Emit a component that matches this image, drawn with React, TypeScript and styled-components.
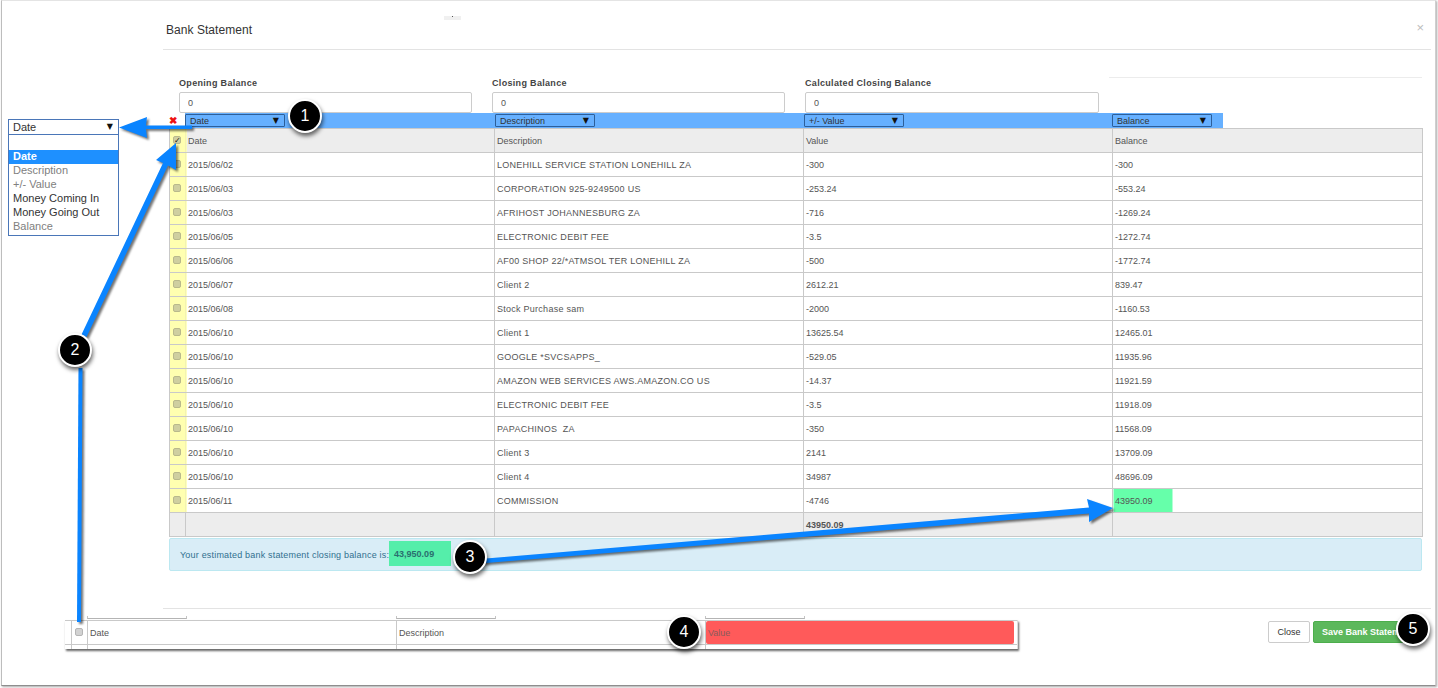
import React from "react";
import styled, { createGlobalStyle } from "styled-components";

const Global = createGlobalStyle`
  html, body { margin: 0; padding: 0; background: #fff; width: 1438px; height: 688px; overflow: hidden; }
  body { font-family: "Liberation Sans", Arial, sans-serif; color: #555; }
  * { box-sizing: border-box; }
`;

const Page = styled.div`
  position: relative;
  width: 1438px;
  height: 688px;
  overflow: hidden;
  background: #fff;
`;
const Frame = styled.div`
  margin-left: 1px;
  width: 1435px;
  height: 686px;
  background: #fff;
  border-top: 1px solid #e4e4e4;
  border-left: 1px solid #bdbdbd;
  border-right: 1px solid #cfcfcf;
  border-bottom: 1px solid #8e8e8e;
  box-shadow: 1px 1px 2px rgba(0, 0, 0, 0.35);
  padding-left: 161px;
  padding-right: 4px;
  display: flex;
  flex-direction: column;
`;
const Header = styled.header`
  position: relative;
  height: 49px;
  flex: none;
  border-bottom: 1px solid #e3e3e3;
  padding: 21px 0 0 3px;
  width: 1268px;
`;
const Title = styled.h4`
  margin: 0;
  font-weight: 400;
  font-size: 12px;
  line-height: 16px;
  letter-spacing: 0.05px;
  color: #333;
`;
const Grip = styled.span`
  position: absolute;
  left: 281px;
  top: 15px;
  width: 17px;
  height: 4px;
  background: #f0f0f0;
  &::after {
    content: "";
    position: absolute;
    left: 8px;
    top: 0;
    width: 1px;
    height: 1px;
    background: #555;
  }
`;
const CloseX = styled.span`
  position: absolute;
  right: 7px;
  top: 20px;
  font-size: 13px;
  line-height: 14px;
  color: #bdbdbd;
`;
const Body = styled.main`
  flex: none;
  height: 558px;
  padding: 27px 8px 0 6px;
`;
const FormRow = styled.div`
  display: grid;
  grid-template-columns: 313px 313px 304px 313px;
  padding-left: 10px;
  height: 36px;
`;
const Field = styled.div`
  display: flex;
  flex-direction: column;
  padding-top: 1px;
  &:nth-child(3) input { width: 294px; }
`;
const Rule = styled.div`
  border-top: 1px solid #ececec;
  height: 1px;
`;
const Label = styled.label`
  font-size: 9px;
  font-weight: 700;
  line-height: 10px;
  letter-spacing: 0.32px;
  color: #444;
  margin-bottom: 4px;
`;
const TextField = styled.input`
  width: 293px;
  height: 21px;
  padding: 0 8px;
  font: 9px "Liberation Sans", sans-serif;
  color: #555;
  background: #fff;
  border: 1px solid #ccc;
  border-radius: 2px;
  outline: none;
`;
const SelectRow = styled.div`
  display: flex;
  height: 15px;
`;
const Cross = styled.span`
  width: 16px;
  flex: none;
  padding-right: 8px;
  text-align: center;
  font-size: 10px;
  line-height: 15px;
  font-weight: 700;
  color: #ee1111;
`;
const Bar = styled.div`
  width: 1038px;
  display: grid;
  grid-template-columns: 310px 309px 308px 111px;
  background: #66b0ff;
  padding-top: 1px;
`;
const MiniSelect = styled.div`
  width: 100px;
  height: 13px;
  display: flex;
  align-items: center;
  justify-content: space-between;
  padding: 0 5px 0 4px;
  border: 1px solid #2d5f9a;
  border-radius: 1px;
  font-size: 9px;
  color: #333;
`;
const Arrow = styled.span`
  font-family: "DejaVu Sans", sans-serif;
  font-size: 8px;
  line-height: 1;
  color: #111;
`;
const Table = styled.table`
  width: 1253px;
  table-layout: fixed;
  border-collapse: collapse;
  font-size: 9px;
  color: #555;
`;
const Tr = styled.tr<{ $shade?: boolean }>`
  height: 24px;
  background: ${(p) => (p.$shade ? "#ededed" : "#fff")};
`;
const Td = styled.td<{ $strong?: boolean; $match?: boolean; $wide?: boolean }>`
  position: relative;
  height: 24px;
  padding: 0 0 0 2px;
  border: 1px solid #c9c9c9;
  vertical-align: middle;
  white-space: pre;
  letter-spacing: ${(p) => (p.$wide ? "0.26px" : "0")};
  font-weight: ${(p) => (p.$strong ? 700 : 400)};
  background: ${(p) =>
    p.$match ? "linear-gradient(to right, #66ffaa 59px, transparent 59px)" : "transparent"};
`;
const CheckTd = styled(Td)<{ $plain?: boolean }>`
  padding: 0;
  background: ${(p) => (p.$plain ? "transparent" : "#ffffb0")};
  &::after {
    content: "";
    display: ${(p) => (p.$plain ? "none" : "block")};
    position: absolute;
    left: 100%;
    top: 0;
    width: 2px;
    height: 100%;
    background: rgba(255, 255, 170, 0.75);
  }
`;
const Check = styled.span<{ $grey?: boolean }>`
  display: block;
  position: relative;
  width: 8px;
  height: 8px;
  margin: -2px 0 0 3px;
  border-radius: 2px;
  border: 1px solid ${(p) => (p.$grey ? "#b5b5b5" : "#b9b98c")};
  background: ${(p) => (p.$grey ? "#d2d2d2" : "#cfcfa0")};
  color: #111;
  font: 700 8px/7px "DejaVu Sans", sans-serif;
`;
const SnipCheck = styled(Check)`
  margin: 0 0 0 1px;
`;
const Alert = styled.div`
  height: 33px;
  width: 1253px;
  margin-top: 1px;
  display: flex;
  align-items: center;
  padding-left: 10px;
  background: #d9edf7;
  border: 1px solid #bce8f1;
  border-radius: 2px;
  font-size: 9px;
  letter-spacing: 0.19px;
  color: #31708f;
`;
const Estimate = styled.b`
  display: flex;
  align-items: center;
  width: 62px;
  height: 25px;
  margin: -2px 0 0 0;
  padding-left: 5px;
  background: #55eeaa;
  letter-spacing: 0;
  color: #2a6f6f;
`;
const Footer = styled.footer`
  width: 1268px;
  flex: 1;
  border-top: 1px solid #e3e3e3;
  display: flex;
  justify-content: flex-end;
  gap: 3px;
  padding: 12px 8px 0 0;
  align-items: flex-start;
`;
const Btn = styled.button<{ $primary?: boolean }>`
  height: 22px;
  width: ${(p) => (p.$primary ? "110px" : "42px")};
  padding: 0 0 0 ${(p) => (p.$primary ? "8px" : "0")};
  text-align: ${(p) => (p.$primary ? "left" : "center")};
  border-radius: 2px;
  font: ${(p) => (p.$primary ? 700 : 400)} 9px "Liberation Sans", sans-serif;
  color: ${(p) => (p.$primary ? "#fff" : "#333")};
  background: ${(p) => (p.$primary ? "#5cb85c" : "#fff")};
  border: 1px solid ${(p) => (p.$primary ? "#4cae4c" : "#ccc")};
`;

const DropBox = styled.div`
  position: absolute;
  left: 8px;
  top: 119px;
  width: 111px;
  font-size: 11px;
  color: #333;
  background: #fff;
`;
const DropHead = styled.div`
  height: 16px;
  display: flex;
  align-items: center;
  justify-content: space-between;
  padding: 0 5px 0 4px;
  border: 1px solid #4a76b8;
`;
const DropList = styled.ul`
  list-style: none;
  margin: 0;
  padding: 15px 0 1px;
  border: 1px solid #4a76b8;
  border-top: none;
`;
const DropItem = styled.li<{ $active?: boolean; $dim?: boolean }>`
  height: 14px;
  line-height: 13px;
  padding-left: 4px;
  font-weight: ${(p) => (p.$active ? 700 : 400)};
  background: ${(p) => (p.$active ? "#1e90ff" : "transparent")};
  color: ${(p) => (p.$active ? "#fff" : p.$dim ? "#808080" : "#333")};
`;

const Snippet = styled.div`
  position: absolute;
  left: 65px;
  top: 620px;
  width: 953px;
  height: 29px;
  background: #fff;
  border-right: 1px solid #ddd;
  box-shadow: 1px 2px 2px rgba(0, 0, 0, 0.6);
  font-size: 9px;
  color: #555;
`;
const SnipRow = styled.div`
  display: grid;
  grid-template-columns: 6px 16px 309px 309px 309px;
  height: 29px;
  border-top: 1px solid #c9c9c9;
  background: linear-gradient(to bottom, transparent 23px, #c9c9c9 23px, #c9c9c9 24px, transparent 24px);
`;
const SnipCell = styled.div<{ $bad?: boolean }>`
  height: 28px;
  border-left: 1px solid #c9c9c9;
  padding: 7px 0 0 2px;
  line-height: 10px;
  position: relative;
  &:first-child { border-left: none; }
  ${(p) =>
    p.$bad
      ? `&::before { content: ""; position: absolute; left: 0; top: 0; width: 100%; height: 23px; background: #ff5a5a; border-radius: 2px; }
         & > span { position: relative; color: #8a5a5a; }`
      : ""}
`;
const Tick = styled.i<{ $x: number; $w: number }>`
  position: absolute;
  top: -4px;
  left: ${(p) => p.$x}px;
  width: ${(p) => p.$w}px;
  height: 3px;
  border-left: 1px solid #c4c4c4;
  border-right: 1px solid #c4c4c4;
  border-bottom: 1px solid #b4b4b4;
  background: #fff;
  z-index: 1;
`;

const Marks = styled.svg`
  position: absolute;
  left: 0;
  top: 0;
  width: 1438px;
  height: 688px;
  pointer-events: none;
  filter: drop-shadow(2px 2px 1.2px rgba(0, 0, 0, 0.55));
`;
const Bubble = styled.div<{ $x: number; $y: number; $r: number }>`
  position: absolute;
  left: ${(p) => p.$x - p.$r}px;
  top: ${(p) => p.$y - p.$r}px;
  width: ${(p) => p.$r * 2}px;
  height: ${(p) => p.$r * 2}px;
  border-radius: 50%;
  background: #000;
  border: 2px solid #fff;
  box-shadow: 1px 3px 4px rgba(0, 0, 0, 0.6);
  display: flex;
  align-items: center;
  justify-content: center;
  color: #fff;
  font-size: 16px;
  line-height: 1;
`;

type Row = [string, string, string, string];
const rows: Row[] = [
  ["2015/06/02", "LONEHILL SERVICE STATION LONEHILL ZA", "-300", "-300"],
  ["2015/06/03", "CORPORATION 925-9249500 US", "-253.24", "-553.24"],
  ["2015/06/03", "AFRIHOST JOHANNESBURG ZA", "-716", "-1269.24"],
  ["2015/06/05", "ELECTRONIC DEBIT FEE", "-3.5", "-1272.74"],
  ["2015/06/06", "AF00 SHOP 22/*ATMSOL TER LONEHILL ZA", "-500", "-1772.74"],
  ["2015/06/07", "Client 2", "2612.21", "839.47"],
  ["2015/06/08", "Stock Purchase sam", "-2000", "-1160.53"],
  ["2015/06/10", "Client 1", "13625.54", "12465.01"],
  ["2015/06/10", "GOOGLE *SVCSAPPS_", "-529.05", "11935.96"],
  ["2015/06/10", "AMAZON WEB SERVICES AWS.AMAZON.CO US", "-14.37", "11921.59"],
  ["2015/06/10", "ELECTRONIC DEBIT FEE", "-3.5", "11918.09"],
  ["2015/06/10", "PAPACHINOS  ZA", "-350", "11568.09"],
  ["2015/06/10", "Client 3", "2141", "13709.09"],
  ["2015/06/10", "Client 4", "34987", "48696.09"],
  ["2015/06/11", "COMMISSION", "-4746", "43950.09"],
];
const selects = ["Date", "Description", "+/- Value", "Balance"];
const columns = [16, 309, 309, 309, 310];
const options: { label: string; active?: boolean; dim?: boolean }[] = [
  { label: "Date", active: true },
  { label: "Description", dim: true },
  { label: "+/- Value", dim: true },
  { label: "Money Coming In" },
  { label: "Money Going Out" },
  { label: "Balance", dim: true },
];
const bubbles = [
  { n: 1, x: 305, y: 116, r: 17 },
  { n: 2, x: 75, y: 350, r: 17 },
  { n: 3, x: 470, y: 557, r: 17 },
  { n: 4, x: 684, y: 632, r: 17 },
  { n: 5, x: 1413, y: 629, r: 17 },
];

export default function App() {
  return (
    <Page>
      <Global />
      <Frame>
        <Header>
          <Title>Bank Statement</Title>
          <Grip />
          <CloseX>×</CloseX>
        </Header>
        <Body>
          <FormRow>
            {["Opening Balance", "Closing Balance", "Calculated Closing Balance"].map((l) => (
              <Field key={l}>
                <Label>{l}</Label>
                <TextField defaultValue="0" />
              </Field>
            ))}
            <Rule />
          </FormRow>
          <SelectRow>
            <Cross>✖</Cross>
            <Bar>
              {selects.map((s) => (
                <div key={s}>
                  <MiniSelect>
                    {s}
                    <Arrow>▼</Arrow>
                  </MiniSelect>
                </div>
              ))}
            </Bar>
          </SelectRow>
          <Table>
            <colgroup>
              {columns.map((w, i) => (
                <col key={i} width={w} />
              ))}
            </colgroup>
            <tbody>
              <Tr $shade>
                <CheckTd>
                  <Check>✓</Check>
                </CheckTd>
                <Td>Date</Td>
                <Td>Description</Td>
                <Td>Value</Td>
                <Td>Balance</Td>
              </Tr>
              {rows.map((r, i) => (
                <Tr key={i}>
                  <CheckTd>
                    <Check />
                  </CheckTd>
                  <Td>{r[0]}</Td>
                  <Td $wide>{r[1]}</Td>
                  <Td>{r[2]}</Td>
                  <Td $match={i === rows.length - 1}>{r[3]}</Td>
                </Tr>
              ))}
              <Tr $shade>
                <CheckTd $plain />
                <Td />
                <Td />
                <Td $strong>43950.09</Td>
                <Td />
              </Tr>
            </tbody>
          </Table>
          <Alert>
            Your estimated bank statement closing balance is:
            <Estimate>43,950.09</Estimate>
          </Alert>
        </Body>
        <Footer>
          <Btn>Close</Btn>
          <Btn $primary>Save Bank Statement</Btn>
        </Footer>
      </Frame>

      <DropBox>
        <DropHead>
          Date
          <Arrow>▼</Arrow>
        </DropHead>
        <DropList>
          {options.map((o) => (
            <DropItem key={o.label} $active={o.active} $dim={o.dim}>
              {o.label}
            </DropItem>
          ))}
        </DropList>
      </DropBox>

      <Snippet>
        <Tick $x={22} $w={100} />
        <Tick $x={331} $w={100} />
        <Tick $x={640} $w={100} />
        <SnipRow>
          <SnipCell />
          <SnipCell>
            <SnipCheck $grey />
          </SnipCell>
          <SnipCell>Date</SnipCell>
          <SnipCell>Description</SnipCell>
          <SnipCell $bad>
            <span>Value</span>
          </SnipCell>
        </SnipRow>
      </Snippet>

      <Marks viewBox="0 0 1438 688">
        <g fill="#0a84ff" stroke="none">
          <polygon points="119,127.5 147,117 146,125.5 192,125.5 192,129 146,129 147,138" />
          <polygon points="176,143 176,170 168,165.5 86.5,337 81.5,334.5 163,163 156,160" />
          <polygon points="78.5,368 82.5,368 81,622 77,622" />
          <polygon points="1113,508 1087,499 1089,507.5 480,559 480,563.5 1089,513.5 1089,522" />
        </g>
      </Marks>

      {bubbles.map((b) => (
        <Bubble key={b.n} $x={b.x} $y={b.y} $r={b.r}>
          {b.n}
        </Bubble>
      ))}
    </Page>
  );
}
